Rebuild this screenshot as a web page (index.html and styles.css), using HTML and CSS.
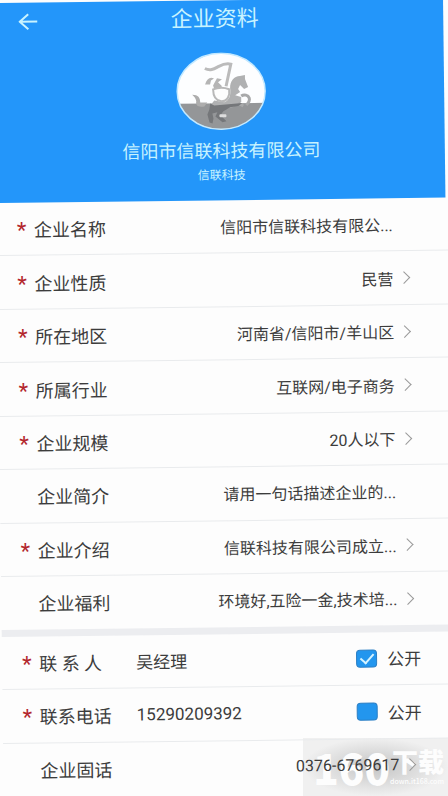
FILE: index.html
```html
<!DOCTYPE html>
<html lang="zh-CN">
  <head>
    <meta charset="utf-8">
    <meta name="viewport" content="width=device-width, initial-scale=1">
    <title>企业资料</title>
    <link rel="stylesheet" href="styles.css">
  </head>
  <body>
    <div class="screen">
      <!-- Header -->
      <header class="header">
        <div class="nav">
          <button type="button" class="back" aria-label="返回">
            <svg width="20" height="18" viewBox="0 0 20 18"><path d="M10 1.500L1.500 9L10 16.500M1.500 9H19" /></svg>
          </button>
          <h1>企业资料</h1>
        </div>
        <svg class="avatar" width="90" height="78" viewBox="0 0 90 78">
          <clipPath id="oval"><ellipse cx="45" cy="39" rx="44" ry="38" /></clipPath>
          <g clip-path="url(#oval)">
            <rect width="90" height="78" fill="#fdfeff" />
            <rect y="51" width="90" height="27" fill="#949698" />
            <!-- horse -->
            <path d="M54 36C54 29 58 24 64 24L69 23L69 27L72 35L68 37L64 33L62 37L64 40L59 43L65 45V50L56 55L48 57L42 60L35 58L34 53L38 48L48 50C53 48 55 43 54 36Z" fill="#b0b1b2" />
            <path d="M16 42C22 42 24 45 24 50L31 50L28 54C22 55 19 53 20 49C20 46 18 44 16 42Z" fill="#adadad" />
            <path d="M65 44C68 42 72 43 73 46C74 49 72 51 70 53M62 51L67 54" fill="none" stroke="#a8a9aa" stroke-width="3" />
            <path d="M34 51L38 53L66 51L62 54L54 55L47 59L44 63L50 69L46 70L39 64L41 60L36 61L37 66L36 71L33 70L31 62L33 57Z" fill="#75777a" />
            <!-- flag and rider -->
            <path d="M29 16C35 19 39 16 43 14C47 12 51 11 55 12L50 34" fill="none" stroke="#bbb" stroke-width="3" />
            <path d="M29 32C31 26 34 24 38 26L35 28L34 32ZM37 33L41 26L46 27L42 30L46 34L39 39Z" fill="#b5b5b5" />
            <path d="M37 37C42 35 48 35 53 37C54 44 51 49 45 49C39 48 37 43 37 37Z" fill="#fdfdfd" stroke="#b8b8b8" stroke-width="2" />
            <rect x="43" y="62" width="7" height="3" rx="1" fill="#ddd" />
          </g>
          <ellipse cx="45" cy="39" rx="44" ry="38" fill="none" stroke="#c3e9ff" stroke-width="1.500" />
        </svg>
        <h2>信阳市信联科技有限公司</h2>
        <p class="short-name">信联科技</p>
      </header>

      <!-- Company fields -->
      <main class="fields">
        <div class="row"><span class="star">*</span><span class="label">企业名称</span><span class="value">信阳市信联科技有限公...</span></div>
        <div class="row"><span class="star">*</span><span class="label">企业性质</span><a href="#" class="value arrow">民营</a></div>
        <div class="row"><span class="star">*</span><span class="label">所在地区</span><a href="#" class="value arrow">河南省/信阳市/羊山区</a></div>
        <div class="row"><span class="star">*</span><span class="label">所属行业</span><a href="#" class="value arrow">互联网/电子商务</a></div>
        <div class="row"><span class="star">*</span><span class="label">企业规模</span><a href="#" class="value arrow">20人以下</a></div>
        <div class="row"><span class="star"></span><span class="label">企业简介</span><span class="value">请用一句话描述企业的...</span></div>
        <div class="row"><span class="star">*</span><span class="label">企业介绍</span><a href="#" class="value arrow">信联科技有限公司成立...</a></div>
        <div class="row last"><span class="star"></span><span class="label">企业福利</span><a href="#" class="value arrow">环境好,五险一金,技术培...</a></div>

        <div class="divider"></div>

        <!-- Contact fields -->
        <div class="row">
          <span class="star">*</span><span class="label">联 系 人</span><span class="contact">吴经理</span>
          <label class="public"><input type="checkbox" checked>公开</label>
        </div>
        <div class="row">
          <span class="star">*</span><span class="label">联系电话</span><span class="contact">15290209392</span>
          <label class="public"><input type="checkbox">公开</label>
        </div>
        <div class="row last"><span class="star"></span><span class="label">企业固话</span><a href="#" class="value arrow">0376-6769617</a></div>
      </main>
    </div>

    <!-- Watermark -->
    <div class="watermark">
      <span class="mark-number">160</span>
      <div class="mark-side">
        <span class="mark-name">下载</span>
        <span class="mark-url">down.it168.com</span>
      </div>
    </div>
  </body>
</html>
```

FILE: styles.css
```css
* {
  box-sizing: border-box;
}

body {
  position: relative;
  margin: 0;
  min-height: 100vh;
  overflow: hidden;
  background: #fdfdfd;
  color: #3c3c3c;
  font-family: Roboto, "Noto Sans CJK SC", sans-serif;
}

/* The whole screen leans slightly to the left */
.screen {
  display: flex;
  flex-direction: column;
  min-height: 100vh;
  margin-right: 5px;
  padding-top: 3px;
  transform: rotate(-0.7deg);
  transform-origin: 0 0;
}

/* Header */
.header {
  display: flex;
  flex-direction: column;
  align-items: center;
  height: 200px;
  margin-left: -4px;
  background: #2396fa;
  color: #c8f3ff;
}

.nav {
  display: flex;
  align-items: center;
  width: 100%;
  height: 38px;
  padding: 0 52px 0 22px;
}

.nav h1 {
  flex: 1;
  margin: 0;
  font-size: 22px;
  font-weight: 400;
  line-height: 38px;
  text-align: center;
}

.back {
  display: flex;
  padding: 0;
  border: none;
  background: none;
  cursor: pointer;
}

.back svg {
  fill: none;
  stroke: #c8f3ff;
  stroke-width: 2;
}

.avatar {
  margin-top: 14px;
}

.header h2 {
  margin: 8px 0 0;
  font-size: 18px;
  font-weight: 400;
  line-height: 26px;
}

.short-name {
  margin: 2px 0 0;
  font-size: 12px;
  line-height: 18px;
}

/* Field rows */
.fields {
  flex: 1;
  display: flex;
  flex-direction: column;
  margin: 0 -8px 0 -6px;
}

.row {
  flex: 1;
  display: flex;
  align-items: center;
  min-height: 48px;
  padding: 0 43px 0 20px;
  border-bottom: 1px solid #e9ebed;
}

.row.last {
  border-bottom: none;
}

.star {
  width: 17px;
  height: 20px;
  color: #b3272d;
  font-size: 22px;
  line-height: 24px;
}

.label {
  width: 97px;
  font-size: 18px;
}

.value {
  flex: 1;
  display: flex;
  justify-content: flex-end;
  align-items: center;
  padding-right: 18px;
  color: inherit;
  font-size: 16px;
  text-decoration: none;
  white-space: nowrap;
}

.value.arrow {
  padding-right: 3px;
}

.arrow::after {
  content: "";
  width: 8px;
  height: 8px;
  margin-left: 6px;
  border-top: 1px solid #999;
  border-right: 1px solid #999;
  transform: rotate(45deg);
}

.divider {
  height: 7px;
  background: #ecedf0;
}

/* Contact rows */
.contact {
  flex: 1;
  font-size: 17px;
}

.public {
  display: flex;
  align-items: center;
  gap: 10px;
  margin-right: -5px;
  font-size: 17px;
}

.public input {
  appearance: none;
  display: flex;
  align-items: center;
  justify-content: center;
  width: 21px;
  height: 18px;
  margin: 0;
  border: 1px solid #2c7fc4;
  border-radius: 4px;
  background: #2396ee;
}

.public input:checked::after {
  content: "";
  width: 6px;
  height: 11px;
  margin-bottom: 3px;
  border-right: 2px solid #d5f3ff;
  border-bottom: 2px solid #d5f3ff;
  transform: rotate(42deg);
}

/* Watermark in the bottom right corner, behind the rows */
.watermark {
  position: absolute;
  z-index: -1;
  right: 0;
  bottom: 0;
  display: flex;
  align-items: center;
  height: 58px;
  padding: 0 4px 0 10px;
  background: radial-gradient(closest-side, #c4c4c4, #f0f0f0);
  color: #fdfdfd;
  font-family: "Noto Sans CJK SC", sans-serif;
  font-weight: 900;
}

.mark-number {
  font-size: 42px;
  line-height: 42px;
}

.mark-side {
  display: flex;
  flex-direction: column;
  align-items: flex-end;
}

.mark-name {
  font-size: 26px;
  line-height: 28px;
}

.mark-url {
  font-size: 7px;
  font-weight: 500;
  line-height: 12px;
}
```
